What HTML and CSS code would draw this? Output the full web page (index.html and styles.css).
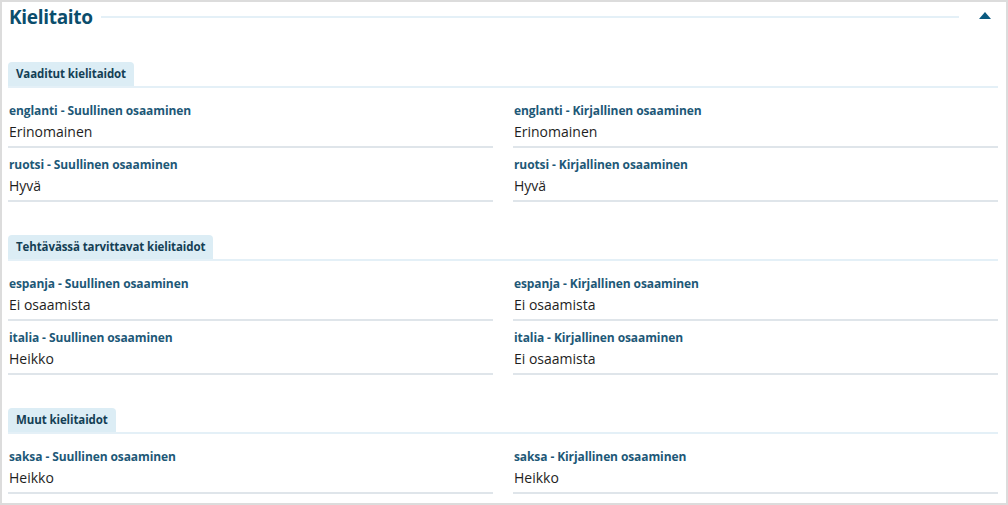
FILE: index.html
```html
<!DOCTYPE html>
<html lang="fi">
<head>
    <meta charset="UTF-8">
    <meta name="viewport" content="width=device-width, initial-scale=1.0">
    <title>Kielitaito</title>
    <link rel="stylesheet" href="styles.css">
</head>
<body>

<div class="paneeli">
    <!-- Otsikko -->
    <div class="otsikko">
        <h2>Kielitaito</h2>
        <span class="otsikko-viiva"></span>
        <span class="kolmio"></span>
    </div>

    <!-- Vaaditut kielitaidot -->
    <div class="ryhma">
        <div class="valilehti"><span>Vaaditut kielitaidot</span></div>
        <div class="kentat">
            <div class="kentta">
                <div class="nimi">englanti - Suullinen osaaminen</div>
                <div class="arvo">Erinomainen</div>
            </div>
            <div class="kentta">
                <div class="nimi">englanti - Kirjallinen osaaminen</div>
                <div class="arvo">Erinomainen</div>
            </div>
            <div class="kentta">
                <div class="nimi">ruotsi - Suullinen osaaminen</div>
                <div class="arvo">Hyvä</div>
            </div>
            <div class="kentta">
                <div class="nimi">ruotsi - Kirjallinen osaaminen</div>
                <div class="arvo">Hyvä</div>
            </div>
        </div>
    </div>

    <!-- Tehtävässä tarvittavat kielitaidot -->
    <div class="ryhma">
        <div class="valilehti"><span>Tehtävässä tarvittavat kielitaidot</span></div>
        <div class="kentat">
            <div class="kentta">
                <div class="nimi">espanja - Suullinen osaaminen</div>
                <div class="arvo">Ei osaamista</div>
            </div>
            <div class="kentta">
                <div class="nimi">espanja - Kirjallinen osaaminen</div>
                <div class="arvo">Ei osaamista</div>
            </div>
            <div class="kentta">
                <div class="nimi">italia - Suullinen osaaminen</div>
                <div class="arvo">Heikko</div>
            </div>
            <div class="kentta">
                <div class="nimi">italia - Kirjallinen osaaminen</div>
                <div class="arvo">Ei osaamista</div>
            </div>
        </div>
    </div>

    <!-- Muut kielitaidot -->
    <div class="ryhma">
        <div class="valilehti"><span>Muut kielitaidot</span></div>
        <div class="kentat">
            <div class="kentta">
                <div class="nimi">saksa - Suullinen osaaminen</div>
                <div class="arvo">Heikko</div>
            </div>
            <div class="kentta">
                <div class="nimi">saksa - Kirjallinen osaaminen</div>
                <div class="arvo">Heikko</div>
            </div>
        </div>
    </div>
</div>

</body>
</html>
```

FILE: styles.css
```css
/* Yleiset tyylit */
body {
    margin: 0;
    background: #fff;
    font-family: "Open Sans", Arial, sans-serif;
}

.paneeli {
    box-sizing: border-box;
    width: 1008px;
    height: 505px;
    border: 2px solid #dcdcdc;
    padding: 0 8px 0 6px;
    overflow: hidden;
}

/* Otsikko */
.otsikko {
    display: flex;
    align-items: center;
    height: 30px;
}

.otsikko h2 {
    margin: 0 0 0 1px;
    font-size: 19px;
    font-weight: 700;
    color: #0b4d6c;
    letter-spacing: -0.3px;
}

.otsikko-viiva {
    flex: 1;
    height: 2px;
    margin: 0 20px 0 8px;
    background-color: #e4f0f7;
}

.kolmio {
    width: 0;
    height: 0;
    border-left: 6.5px solid transparent;
    border-right: 6.5px solid transparent;
    border-bottom: 7px solid #0b5a80;
    margin-right: 7px;
    margin-bottom: 4px;
}

/* Ryhmät */
.ryhma {
    margin-top: 29px;
}

.ryhma + .ryhma {
    margin-top: 32px;
}

.valilehti {
    border-bottom: 2px solid #e4f0f7;
}

.valilehti span {
    display: inline-block;
    background-color: #dcedf5;
    border-radius: 4px 4px 0 0;
    padding: 0 8px;
    height: 24px;
    line-height: 24px;
    font-size: 11.5px;
    font-weight: 700;
    letter-spacing: -0.1px;
    color: #143f55;
}

/* Kentät */
.kentat {
    display: grid;
    grid-template-columns: 1fr 1fr;
    column-gap: 20px;
    margin-top: 6px;
}

.kentta {
    padding: 9px 0 4px 1px;
    border-bottom: 2px solid #dfe5ea;
}

.nimi {
    font-size: 12px;
    line-height: 16px;
    font-weight: 700;
    letter-spacing: -0.1px;
    color: #1d5877;
}

.arvo {
    margin-top: 3px;
    font-size: 14px;
    line-height: 20px;
    color: #1e1e1e;
}
```
